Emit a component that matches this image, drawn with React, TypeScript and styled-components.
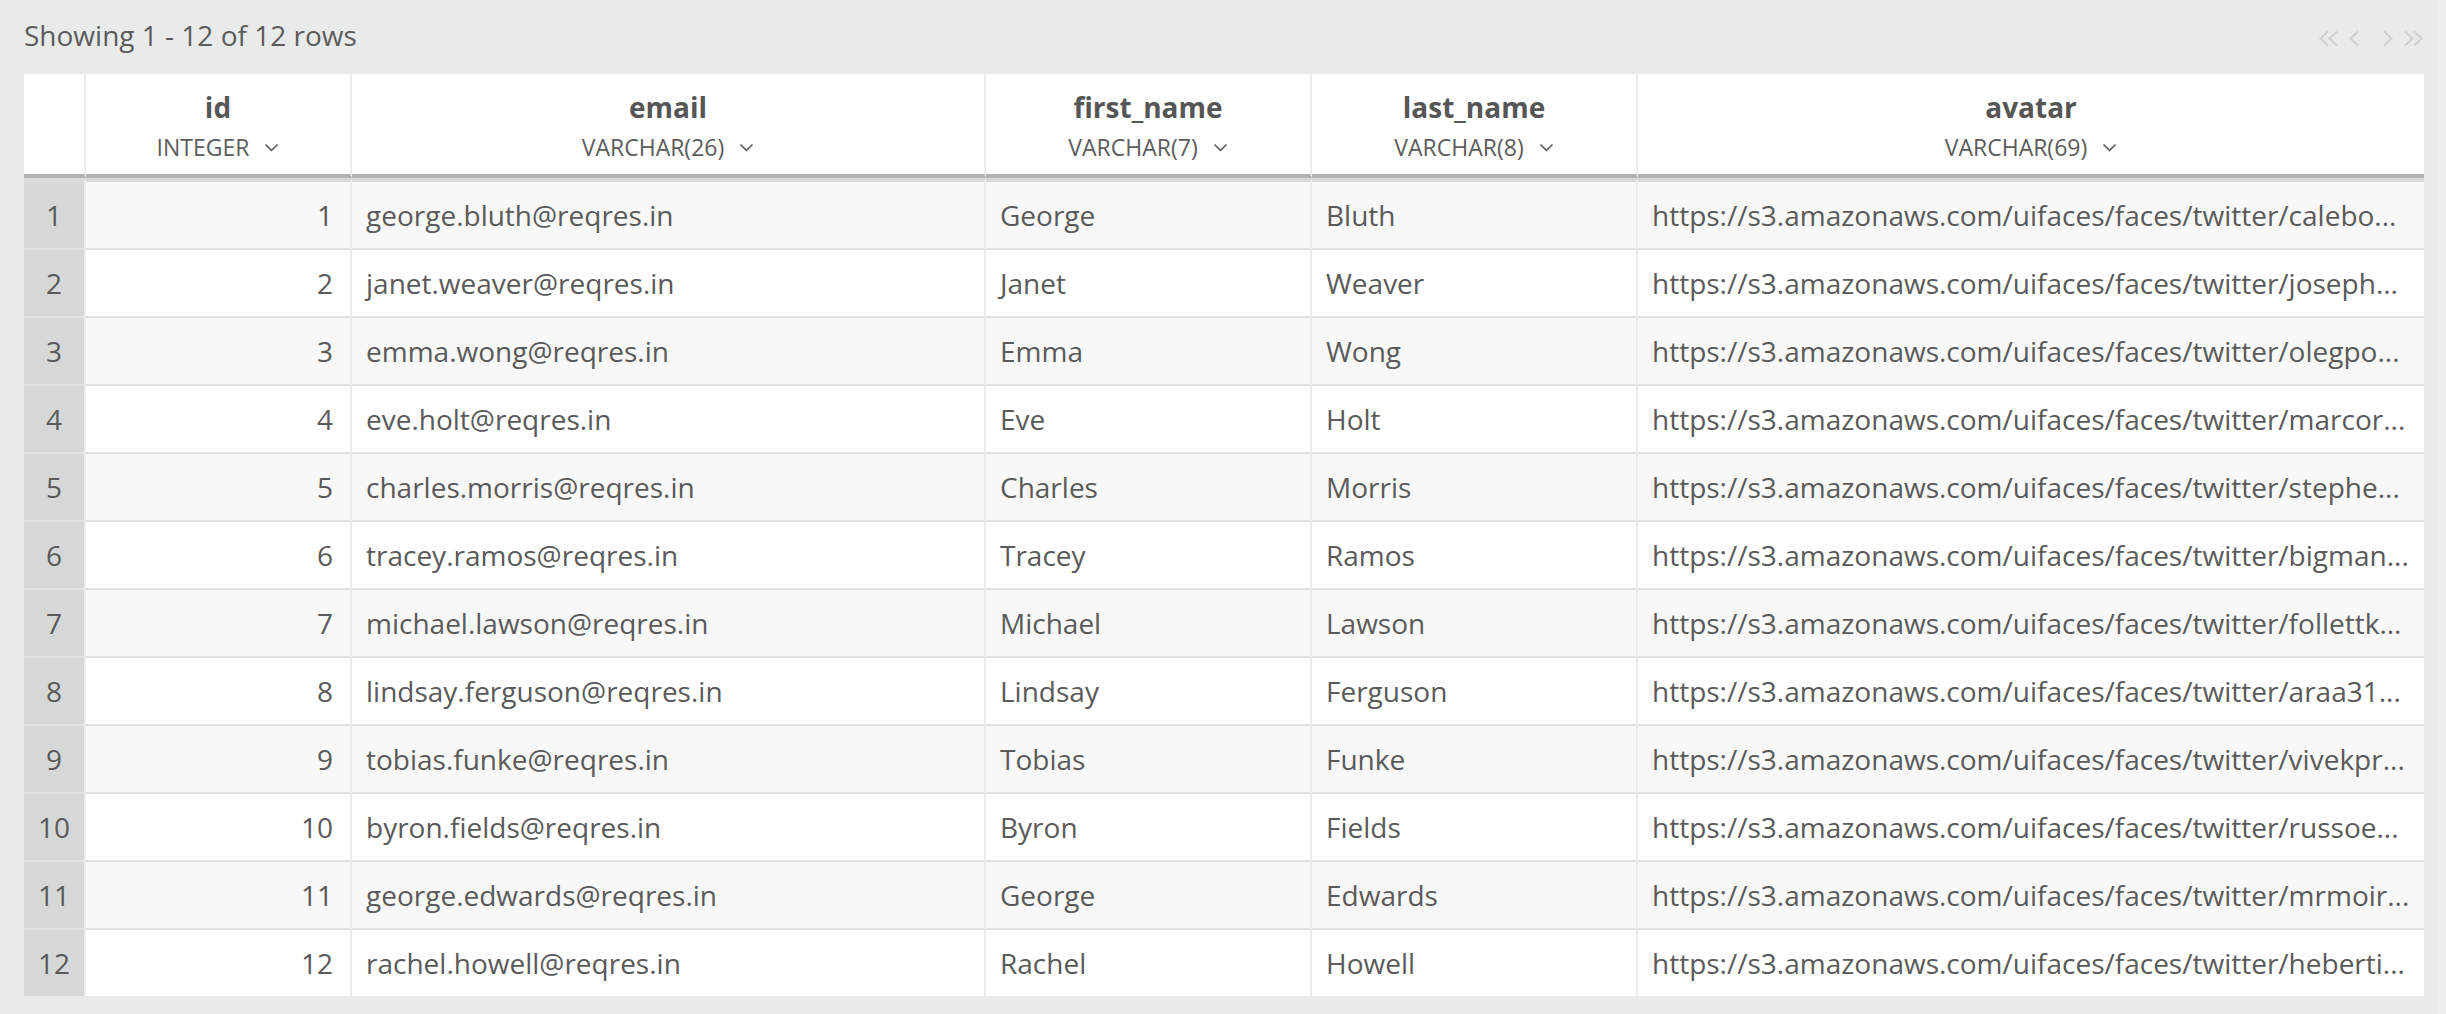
import React from "react";
import styled, { createGlobalStyle } from "styled-components";

const GlobalStyle = createGlobalStyle`
  html, body {
    margin: 0;
    padding: 0;
    background: #e9ebea;
  }
  body {
    font-family: "Open Sans", "Liberation Sans", sans-serif;
    color: #5a5a5a;
  }
`;

const Page = styled.div`
  display: flex;
  width: 2446px;
  min-height: 1014px;
`;

const Main = styled.main`
  flex: 1;
  min-width: 0;
  padding: 0 14px 0 24px;
`;

const ScrollTrack = styled.div`
  width: 8px;
  background: #eeefef;
`;

const TopBar = styled.div`
  height: 74px;
  display: flex;
  align-items: flex-start;
  justify-content: space-between;
`;

const Summary = styled.div`
  padding-top: 16px;
  font-size: 28px;
  line-height: 38px;
  color: #5c5c5c;
`;

const Pager = styled.div`
  margin-top: 30px;
  display: flex;
  align-items: center;
  gap: 22px;
`;

const PagerGroup = styled.div`
  display: flex;
  align-items: center;
  gap: 9px;
`;

const PagerButton = styled.span`
  display: inline-flex;
  color: #cfd1d0;
  cursor: default;
`;

const Table = styled.table`
  width: 2400px;
  table-layout: fixed;
  border-collapse: separate;
  border-spacing: 0;
  background: #fff;
`;

const HeadCell = styled.th<{ $last?: boolean }>`
  padding: 0;
  vertical-align: top;
  background: #fff;
  font-weight: 400;
  border-right: ${(p) => (p.$last ? "0" : "2px solid #ececec")};
  border-bottom: 4px solid #b2b2b2;
`;

const HeadInner = styled.div`
  height: 100px;
  display: flex;
  flex-direction: column;
  align-items: center;
`;

const ColName = styled.div`
  margin-top: 14px;
  font-size: 28px;
  line-height: 38px;
  font-weight: 700;
  color: #565656;
`;

const ColType = styled.div`
  margin-top: 6px;
  display: flex;
  align-items: center;
  gap: 15px;
  font-size: 23px;
  line-height: 30px;
  font-weight: 400;
  color: #5c5c5c;
`;

const Row = styled.tr<{ $odd: boolean }>`
  background: ${(p) => (p.$odd ? "#f8f8f8" : "#ffffff")};

  &:first-child td {
    border-top: 4px solid #dadada;
  }
  &:last-child td {
    border-bottom: 0;
  }
`;

const Cell = styled.td<{ $align?: "left" | "right"; $last?: boolean }>`
  padding: 0 ${(p) => (p.$last ? "4px" : "17px")} 0 14px;
  font-size: 28px;
  line-height: 66px;
  color: #5a5a5a;
  text-align: ${(p) => p.$align ?? "left"};
  white-space: nowrap;
  overflow: hidden;
  text-overflow: ellipsis;
  border-right: ${(p) => (p.$last ? "0" : "2px solid #ececec")};
  border-bottom: 2px solid #e1e1e1;
`;

const IndexCell = styled.td`
  padding: 0;
  font-size: 28px;
  line-height: 66px;
  text-align: center;
  color: #5a5a5a;
  background: #d6d8d7;
  border-right: 2px solid #eeeeee;
  border-bottom: 2px solid #e2e4e3;
`;

const Chevron = () => (
  <svg width="15" height="9" viewBox="0 0 15 9" fill="none">
    <polyline points="1.5,1.5 7.5,7.3 13.5,1.5" stroke="#5c5c5c" strokeWidth="1.6" />
  </svg>
);

const Single = ({ dir }: { dir: "left" | "right" }) => (
  <svg width="12" height="17" viewBox="0 0 12 17" fill="none">
    <polyline
      points={dir === "left" ? "10,1.5 2.5,8.5 10,15.5" : "2,1.5 9.5,8.5 2,15.5"}
      stroke="currentColor"
      strokeWidth="2"
    />
  </svg>
);

const Double = ({ dir }: { dir: "left" | "right" }) => (
  <svg width="21" height="17" viewBox="0 0 21 17" fill="none">
    {dir === "left" ? (
      <>
        <polyline points="10,1.5 2.5,8.5 10,15.5" stroke="currentColor" strokeWidth="2" />
        <polyline points="19,1.5 11.5,8.5 19,15.5" stroke="currentColor" strokeWidth="2" />
      </>
    ) : (
      <>
        <polyline points="2,1.5 9.5,8.5 2,15.5" stroke="currentColor" strokeWidth="2" />
        <polyline points="11,1.5 18.5,8.5 11,15.5" stroke="currentColor" strokeWidth="2" />
      </>
    )}
  </svg>
);

const columns = [
  { name: "id", type: "INTEGER", width: 266 },
  { name: "email", type: "VARCHAR(26)", width: 634 },
  { name: "first_name", type: "VARCHAR(7)", width: 326 },
  { name: "last_name", type: "VARCHAR(8)", width: 326 },
  { name: "avatar", type: "VARCHAR(69)", width: 786 },
];

const base = "https://s3.amazonaws.com/uifaces/faces/twitter/";

const rows = [
  [1, "george.bluth@reqres.in", "George", "Bluth", "calebo..."],
  [2, "janet.weaver@reqres.in", "Janet", "Weaver", "joseph..."],
  [3, "emma.wong@reqres.in", "Emma", "Wong", "olegpo..."],
  [4, "eve.holt@reqres.in", "Eve", "Holt", "marcor..."],
  [5, "charles.morris@reqres.in", "Charles", "Morris", "stephe..."],
  [6, "tracey.ramos@reqres.in", "Tracey", "Ramos", "bigman..."],
  [7, "michael.lawson@reqres.in", "Michael", "Lawson", "follettk..."],
  [8, "lindsay.ferguson@reqres.in", "Lindsay", "Ferguson", "araa31..."],
  [9, "tobias.funke@reqres.in", "Tobias", "Funke", "vivekpr..."],
  [10, "byron.fields@reqres.in", "Byron", "Fields", "russoe..."],
  [11, "george.edwards@reqres.in", "George", "Edwards", "mrmoir..."],
  [12, "rachel.howell@reqres.in", "Rachel", "Howell", "heberti..."],
] as const;

export default function App() {
  return (
    <>
      <GlobalStyle />
      <Page>
        <Main>
          <TopBar>
            <Summary>Showing 1 - 12 of 12 rows</Summary>
            <Pager>
              <PagerGroup>
                <PagerButton>
                  <Double dir="left" />
                </PagerButton>
                <PagerButton>
                  <Single dir="left" />
                </PagerButton>
              </PagerGroup>
              <PagerGroup>
                <PagerButton>
                  <Single dir="right" />
                </PagerButton>
                <PagerButton>
                  <Double dir="right" />
                </PagerButton>
              </PagerGroup>
            </Pager>
          </TopBar>
          <Table>
            <colgroup>
              <col style={{ width: 62 }} />
              {columns.map((c) => (
                <col key={c.name} style={{ width: c.width }} />
              ))}
            </colgroup>
            <thead>
              <tr>
                <HeadCell>
                  <HeadInner />
                </HeadCell>
                {columns.map((c, i) => (
                  <HeadCell key={c.name} $last={i === columns.length - 1}>
                    <HeadInner>
                      <ColName>{c.name}</ColName>
                      <ColType>
                        {c.type}
                        <Chevron />
                      </ColType>
                    </HeadInner>
                  </HeadCell>
                ))}
              </tr>
            </thead>
            <tbody>
              {rows.map((r, i) => (
                <Row key={r[0]} $odd={i % 2 === 0}>
                  <IndexCell>{i + 1}</IndexCell>
                  <Cell $align="right">{r[0]}</Cell>
                  <Cell>{r[1]}</Cell>
                  <Cell>{r[2]}</Cell>
                  <Cell>{r[3]}</Cell>
                  <Cell $last>{base + r[4]}</Cell>
                </Row>
              ))}
            </tbody>
          </Table>
        </Main>
        <ScrollTrack />
      </Page>
    </>
  );
}
